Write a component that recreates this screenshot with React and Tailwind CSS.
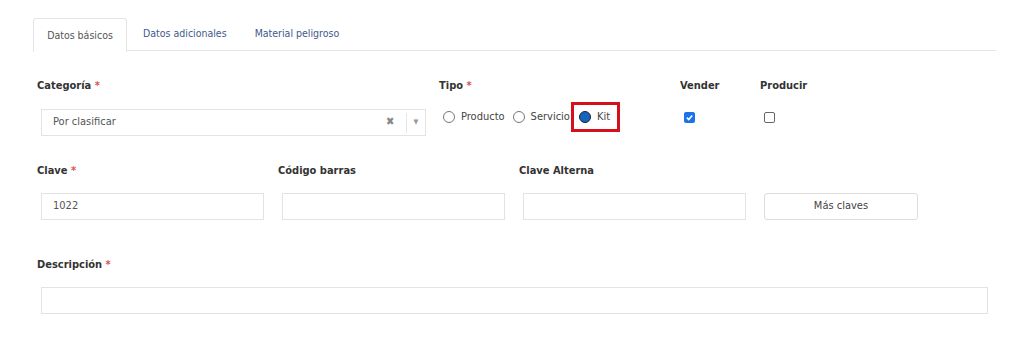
import React from "react";

const F = { fontFamily: '"DejaVu Sans Condensed","DejaVu Sans",sans-serif' };

function Label({ children, req }) {
  return (
    <div className="text-[11px] font-bold text-[#333] leading-[14px] h-[14px]" style={F}>
      {children}
      {req && <span className="text-[#d9534f]"> *</span>}
    </div>
  );
}

function Radio({ checked }) {
  return (
    <span className={"block w-[12px] h-[12px] rounded-full border " + (checked ? "border-[#222] bg-[#1565c0]" : "border-[#777] bg-white")} />
  );
}

export default function App() {
  return (
    <div className="w-[1024px] h-[341px] bg-white text-[#333]" style={F}>
      <div className="pt-[18px] pl-[33px] pr-[28px]">
        <div className="flex border-b border-[#e6e6e6] h-[33px] text-[10.5px]">
          <div className="w-[94px] border border-b-0 border-[#e6e6e6] rounded-t-[3px] bg-white flex items-center justify-center text-[#555] -mb-px h-[34px]">Datos básicos</div>
          <div className="pl-[16px] pr-[13px] flex items-center text-[#3f5a8a]">Datos adicionales</div>
          <div className="pl-[15px] flex items-center text-[#3f5a8a]">Material peligroso</div>
        </div>
      </div>

      <div className="pl-[37px] mt-[28px] flex">
        <div className="w-[402px]">
          <Label req>Categoría</Label>
          <div className="mt-[16px] ml-[4px] w-[385px] h-[27px] border border-[#e3e3e3] flex items-center text-[11px] text-[#555]">
            <span className="pl-[11px] flex-1">Por clasificar</span>
            <span className="w-[20px] text-[#888] text-[11px] font-bold">✖</span>
            <span className="h-[20px] w-px bg-[#e6e6e6]" />
            <span className="w-[18px] flex justify-center text-[#999] text-[7px]">▼</span>
          </div>
        </div>
        <div className="w-[241px]">
          <Label req>Tipo</Label>
          <div className="mt-[10px] h-[27px] flex items-center text-[11px] leading-none text-[#444]">
            <span className="ml-[4px]"><Radio /></span>
            <span className="ml-[6px]">Producto</span>
            <span className="ml-[8px]"><Radio /></span>
            <span className="ml-[6px]">Servicio</span>
            <span className="ml-[1px] w-[49px] h-[30px] border-[3px] border-[#d4111a] flex items-center">
              <span className="ml-[5px]"><Radio checked /></span>
              <span className="ml-[6px]">Kit</span>
            </span>
          </div>
        </div>
        <div className="w-[80px]">
          <Label>Vender</Label>
          <div className="mt-[11px] h-[27px] flex items-center pl-[4px]">
            <span className="w-[11px] h-[11px] rounded-[2px] bg-[#1a73e8] flex items-center justify-center">
              <svg width="9" height="9" viewBox="0 0 10 10"><path d="M2 5.2 L4.2 7.3 L8 2.8" stroke="white" strokeWidth="1.8" fill="none" /></svg>
            </span>
          </div>
        </div>
        <div>
          <Label>Producir</Label>
          <div className="mt-[11px] h-[27px] flex items-center pl-[4px]">
            <span className="w-[11px] h-[11px] rounded-[2px] border border-[#666] bg-white" />
          </div>
        </div>
      </div>

      <div className="pl-[37px] mt-[28px] flex">
        <div className="w-[241px]">
          <Label req>Clave</Label>
          <div className="mt-[15px] ml-[4px] w-[223px] h-[27px] border border-[#e3e3e3] flex items-center pl-[11px] text-[11px] text-[#555]">1022</div>
        </div>
        <div className="w-[241px]">
          <Label>Código barras</Label>
          <div className="mt-[15px] ml-[4px] w-[223px] h-[27px] border border-[#e3e3e3]" />
        </div>
        <div className="w-[241px]">
          <Label>Clave Alterna</Label>
          <div className="mt-[15px] ml-[4px] w-[223px] h-[27px] border border-[#e3e3e3]" />
        </div>
        <div className="pt-[29px]">
          <div className="ml-[4px] w-[154px] h-[27px] border border-[#ddd] rounded-[3px] flex items-center justify-center text-[11px] text-[#444]">Más claves</div>
        </div>
      </div>

      <div className="pl-[37px] mt-[38px]">
        <Label req>Descripción</Label>
        <div className="mt-[15px] ml-[4px] w-[947px] h-[27px] border border-[#e3e3e3]" />
      </div>
    </div>
  );
}
